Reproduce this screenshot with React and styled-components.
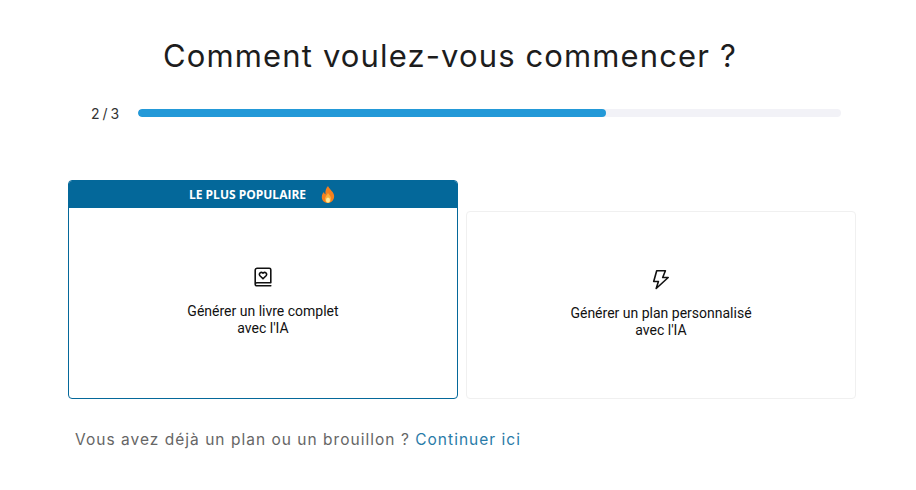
import React from 'react';
import styled, {createGlobalStyle} from 'styled-components';

const GlobalStyle = createGlobalStyle`
    html, body {
        margin: 0;
        padding: 0;
        background: #fff;
    }
`

const Wrapper = styled.div`
    width: 916px;
    height: 490px;
    box-sizing: border-box;
    padding: 36px 60px 0 68px;
    overflow: hidden;
`

const Title = styled.h1`
    margin: 0 0 27px;
    width: 764px;
    text-align: center;
    font-family: "Inter", sans-serif;
    font-size: 31px;
    line-height: 40px;
    font-weight: 400;
    letter-spacing: 1.13px;
    color: #1d1d1d;
`

const ProgressRow = styled.div`
    display: flex;
    align-items: center;
    height: 20px;
    padding-left: 23px;
    width: 773px;
    box-sizing: border-box;
    gap: 19px;
`

const Step = styled.span`
    width: 28px;
    font-family: "Inter", sans-serif;
    font-size: 14px;
    letter-spacing: 0.5px;
    word-spacing: -2px;
    color: #333;
    white-space: nowrap;
`

const Track = styled.div`
    flex: 1;
    height: 8px;
    border-radius: 4px;
    background: #f2f2f7;
    overflow: hidden;
`

const Fill = styled.div`
    height: 100%;
    border-radius: 4px;
    background: #2399d8;
`

const Cards = styled.div`
    display: grid;
    grid-template-columns: 390px 390px;
    gap: 8px;
    align-items: end;
    margin-top: 57px;
`

const Card = styled.div`
    box-sizing: border-box;
    border: 1px solid ${props => props.$featured ? '#04689a' : '#f0f0f0'};
    border-radius: 4px;
    background: #fff;
    overflow: hidden;
`

const Banner = styled.div`
    height: 27px;
    display: flex;
    align-items: center;
    justify-content: center;
    gap: 13px;
    background: #04689a;
    color: #fff;
    font-family: "Open Sans", sans-serif;
    font-size: 12px;
    font-weight: 700;
`

const CardBody = styled.div`
    height: ${props => props.$featured ? '190px' : '186px'};
    box-sizing: border-box;
    padding-bottom: 3px;
    display: flex;
    flex-direction: column;
    align-items: center;
    justify-content: center;
    gap: 15px;
    font-family: "Roboto", sans-serif;
    font-size: 14px;
    line-height: 17px;
    color: #111;
    text-align: center;
`

const Footer = styled.p`
    margin: 31px 0 0 7px;
    font-family: "Inter", sans-serif;
    font-size: 15.5px;
    line-height: 20px;
    letter-spacing: 1.02px;
    color: #666;
`

const Link = styled.a`
    color: #2a7ba8;
`

const BookIcon = () => (
    <svg width="22" height="22" viewBox="0 0 22 22" fill="none" stroke="#111" strokeWidth="1.6" strokeLinejoin="round" strokeLinecap="round">
        <path d="M3.200 18V4.200a2 2 0 0 1 2-2h12.100a1.500 1.500 0 0 1 1.500 1.500v13.100H4.800a1.600 1.600 0 0 0-1.600 1.500 1.500 1.500 0 0 0 1.600 1.500h14"/>
        <path d="M11 12.800 7.700 9.500a2 2 0 0 1 3-2.600l.3.300.3-.3a2 2 0 0 1 3 2.600z"/>
    </svg>
)

const BoltIcon = () => (
    <svg width="22" height="22" viewBox="0 0 22 22" fill="none" stroke="#111" strokeWidth="1.6" strokeLinejoin="round">
        <path d="M6.700 2.700h8.700l-2.700 6.800h5.500l-12 11 2.200-7H3.700z"/>
    </svg>
)

const FlameIcon = () => (
    <svg width="18" height="20" viewBox="0 0 18 20">
        <path fill="#f4801f" d="M9 1c1 3 5 5 6 9 .8 4-2 8-6 8s-7-3-6-7.500c.3-1.500 1-2.500 2-3.500.2 1.200.7 2 1.500 2.300C6 6 7 3 9 1z"/>
        <path fill="#fbb03b" d="M9 8c.8 1.800 3 3 3 5.500S10.600 18 9 18s-3.200-1.800-3-4.200C6.200 11.500 8 10 9 8z"/>
        <ellipse fill="#fde9a0" cx="9" cy="15" rx="2" ry="2.600"/>
    </svg>
)

const App = () => {
    return (
        <Wrapper>
            <GlobalStyle/>
            <Title>Comment voulez-vous commencer ?</Title>
            <ProgressRow>
                <Step>2 / 3</Step>
                <Track>
                    <Fill style={{width: '66.6%'}}/>
                </Track>
            </ProgressRow>
            <Cards>
                <Card $featured>
                    <Banner>
                        LE PLUS POPULAIRE
                        <FlameIcon/>
                    </Banner>
                    <CardBody $featured>
                        <BookIcon/>
                        <span>Générer un livre complet<br/>avec l'IA</span>
                    </CardBody>
                </Card>
                <Card>
                    <CardBody>
                        <BoltIcon/>
                        <span>Générer un plan personnalisé<br/>avec l'IA</span>
                    </CardBody>
                </Card>
            </Cards>
            <Footer>Vous avez déjà un plan ou un brouillon ? <Link>Continuer ici</Link></Footer>
        </Wrapper>
    );
}

export default App;
